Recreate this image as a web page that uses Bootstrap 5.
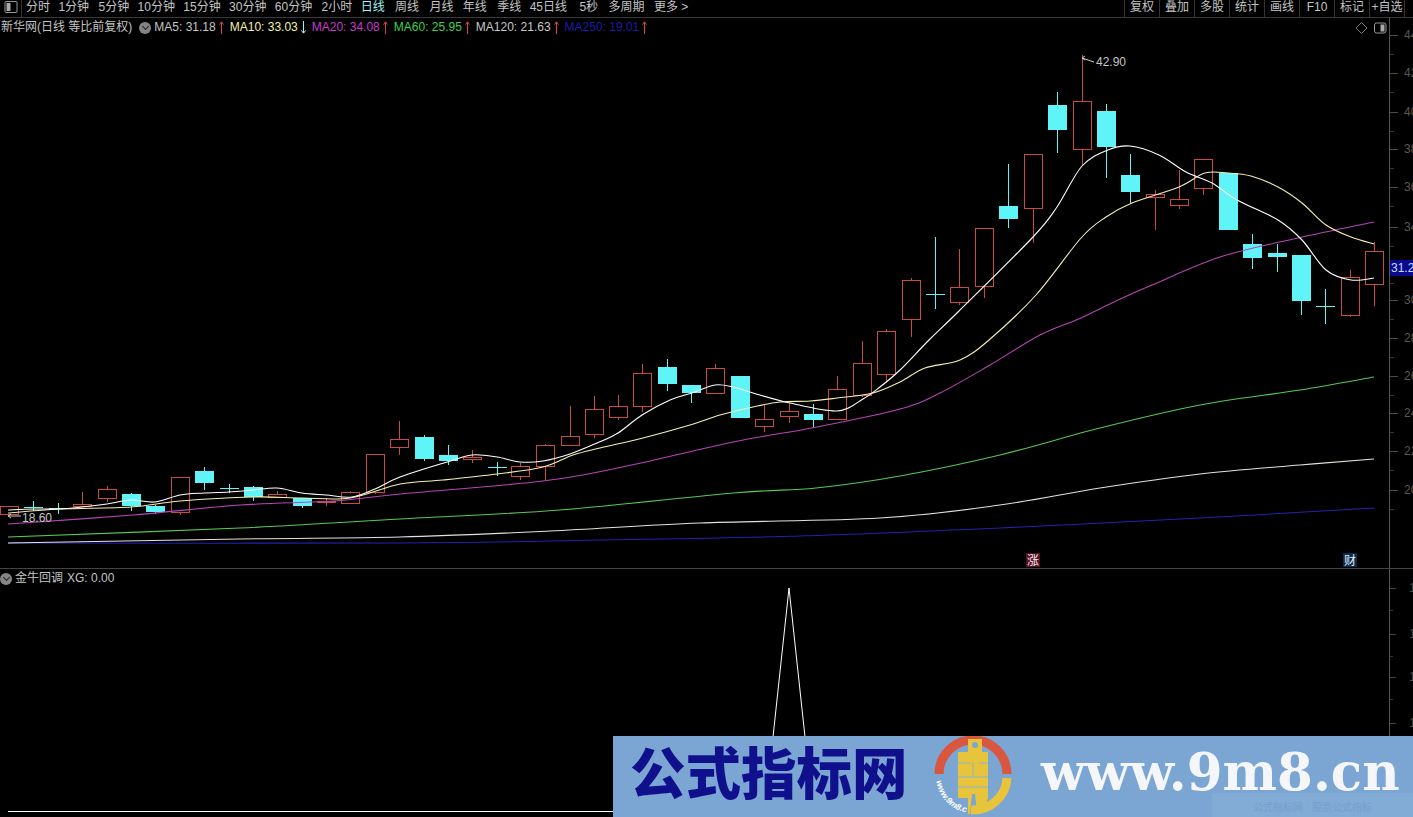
<!DOCTYPE html>
<html lang="zh">
<head>
<meta charset="utf-8">
<title>金牛回调</title>
<link href="https://cdn.jsdelivr.net/npm/bootstrap@5.3.0/dist/css/bootstrap.min.css" rel="stylesheet">
<style>
html,body{height:100%;margin:0;background:#000;overflow:hidden}
body{font-family:"Liberation Sans","Noto Sans CJK SC",sans-serif;font-size:12px;color:#c4c4c4}
.shell{width:1413px;height:817px;background:#000}
.tbar{height:18px;border-bottom:1px solid #3a3a3a;line-height:14px;flex:none}
.tbar-ico{width:14px;height:12px;margin:1px 3px 0 4px;flex:none}
.tsep{width:1px;height:17px;background:#333;margin-right:4px;flex:none}
.tleft{gap:9.4px}
.tleft span{white-space:nowrap}
.tleft .on{color:#9ff5f5}
.tleft .tight{margin-right:-1px}
.tleft .loose{margin-right:1px}
.tleft .wide{margin-right:3px}
.tright{position:absolute;left:1124px;top:0;height:17px;overflow:hidden;width:289px}
.tright span{flex:none;width:35px;border-left:1px solid #333;text-align:center;white-space:nowrap;overflow:hidden}
.upper{height:551px;flex:none;border-bottom:1px solid #444}
.lower{flex:1 1 auto;min-height:0}
.pane-svg{display:block;width:1413px;height:100%}
.legend{position:absolute;left:1px;top:2px;line-height:15px;white-space:nowrap}
.arrow-ico{width:5px;height:13px;margin:0 6px 0 3px;flex:none}
.knob{width:12px;height:12px;border-radius:50%;background:#858585;flex:none;position:relative}
.knob::after{content:"";position:absolute;left:3.500px;top:2px;width:5px;height:5px;border:solid #222;border-width:0 1.5px 1.5px 0;transform:rotate(45deg)}
.legend .knob{margin:0 3px 0 7px}
.c-ma10{color:#f5f0a8}.c-ma20{color:#c83cc8}.c-ma60{color:#3fd24a}.c-ma120{color:#c8c8c8}.c-ma250{color:#1c1ca8}
.corner{position:absolute;left:1355px;top:3px;width:33px;height:14px}
.sub-head{position:absolute;left:0;top:2px;line-height:15px;white-space:nowrap}
.sub-head .knob{margin-right:3px}
.promo{position:absolute;right:0;bottom:0;width:800px;height:81px;background:#7ba5d2;overflow:hidden}
.promo-title{position:absolute;left:17px;top:-2px;font-family:"Noto Sans CJK SC",sans-serif;font-weight:900;font-size:55.500px;line-height:72px;color:#10108c;white-space:nowrap}
.promo-logo{position:absolute;left:320px;top:0;width:84px;height:81px}
.promo-url{position:absolute;left:428px;top:12px;font-family:"DejaVu Serif",serif;font-weight:700;font-size:51.500px;line-height:48px;color:#f4f6fa;white-space:nowrap}
.promo-mark{position:absolute;right:0;bottom:0;width:201px;height:24px;padding-top:8px;background:#82abd6;color:#76a0cf;font-size:10px;line-height:14px;text-align:center}
</style>
</head>
<body>
<svg width="0" height="0" class="position-absolute">
  <symbol id="au" viewBox="0 0 5 13"><path d="M2.500 13V1M.5 3.500 2.500 .8l2 2.700" fill="none" stroke="#d84a44"/></symbol>
  <symbol id="ad" viewBox="0 0 5 13"><path d="M2.500 0V12M.5 9.500l2 2.700 2-2.700" fill="none" stroke="#9ff5f5"/></symbol>
</svg>
<div class="shell d-flex flex-column position-relative">
  <div class="tbar d-flex position-relative">
    <svg class="tbar-ico" viewBox="0 0 14 12"><rect x="1" y="0.5" width="12" height="11" rx="1" fill="none" stroke="#999"/><rect x="2.500" y="2" width="4" height="8" fill="#aaa"/></svg>
    <i class="tsep"></i>
    <div class="tleft d-flex">
      <span class="tight">分时</span><span>1分钟</span><span class="tight">5分钟</span><span class="tight">10分钟</span><span class="tight">15分钟</span><span class="tight">30分钟</span><span>60分钟</span><span class="tight">2小时</span><span class="on loose">日线</span><span class="loose">周线</span><span>月线</span><span class="loose">年线</span><span class="tight">季线</span><span class="wide">45日线</span><span class="loose">5秒</span><span>多周期</span><span>更多 &gt;</span>
    </div>
    <div class="tright d-flex">
      <span>复权</span><span>叠加</span><span>多股</span><span>统计</span><span>画线</span><span>F10</span><span>标记</span><span>+自选</span><span>返</span>
    </div>
  </div>
  <div class="upper position-relative">
    <svg class="pane-svg" id="up" viewBox="0 18 1413 550"></svg>
    <div class="legend d-flex align-items-center">
      <span>新华网(日线 等比前复权)</span><i class="knob"></i>
      <span>MA5: 31.18</span><svg class="arrow-ico"><use href="#au"/></svg>
      <span class="c-ma10">MA10: 33.03</span><svg class="arrow-ico"><use href="#ad"/></svg>
      <span class="c-ma20">MA20: 34.08</span><svg class="arrow-ico"><use href="#au"/></svg>
      <span class="c-ma60">MA60: 25.95</span><svg class="arrow-ico"><use href="#au"/></svg>
      <span class="c-ma120">MA120: 21.63</span><svg class="arrow-ico"><use href="#au"/></svg>
      <span class="c-ma250">MA250: 19.01</span><svg class="arrow-ico"><use href="#au"/></svg>
    </div>
    <svg class="corner" viewBox="0 0 33 14"><path d="M6.500 1.500 12 7 6.500 12.500 1 7Z" fill="none" stroke="#777"/><rect x="19.500" y="2" width="11.500" height="10" rx="2" fill="none" stroke="#999"/><rect x="25.500" y="3.500" width="4" height="7" fill="#aaa"/></svg>
  </div>
  <div class="lower position-relative">
    <svg class="pane-svg" id="low" viewBox="0 569 1413 248"></svg>
    <div class="sub-head d-flex align-items-center"><i class="knob"></i><span>金牛回调</span><span class="ms-1">XG: 0.00</span></div>
  </div>
  <div class="promo">
    <div class="promo-title">公式指标网</div>
    <svg class="promo-logo" viewBox="0 0 84 81">
      <path id="ringpath" d="M3.500 45A37 37 0 0 0 31 76" fill="none"/>
      <path d="M6 38A34 34 0 0 1 74 38" fill="none" stroke="#d9563f" stroke-width="9"/>
      <path d="M74 42A34 34 0 0 1 38 74" fill="none" stroke="#e8c33c" stroke-width="9"/>
      <path d="M35 3h14v13h6v46l-5 14H44L42 58h-3L37 78H35V62H25V16h10Z" fill="#e8c33c"/>
      <circle cx="42" cy="9" r="3" fill="#7ba5d2"/>
      <path d="M25 27h13M46 27h9M25 41h30M25 51h30M40 27v14" stroke="#b6bd8a" stroke-width="1.800" fill="none"/>
      <text font-size="8.500" font-family="Liberation Sans" fill="#fff" font-weight="700" font-style="italic"><textPath href="#ringpath">www.9m8.cn</textPath></text>
    </svg>
    <div class="promo-url">www.9m8.cn</div>
    <div class="promo-mark">公式指标网 · 股票公式指标</div>
  </div>
</div>
<script src="https://cdn.jsdelivr.net/npm/bootstrap@5.3.0/dist/js/bootstrap.bundle.min.js"></script>
<script>
const NS='http://www.w3.org/2000/svg';
function add(p,t,a,txt){const e=document.createElementNS(NS,t);for(const k in a)e.setAttribute(k,a[k]);if(txt!=null)e.textContent=txt;p.appendChild(e);return e}
const up=document.getElementById('up'),low=document.getElementById('low');
// x-centre, high, body top, body bottom, low, kind
const C=[[9,506,506,514,515,'r'],[33,501,507,508,511,'c'],[58,503,508,509,514,'c'],[82,492,504,506,507,'r'],[107,486,489,498,502,'r'],[131,493,494,506,511,'c'],[155,505,506,512,514,'c'],[180,477,477,512,515,'r'],[204,467,471,483,490,'c'],[229,484,488,489,493,'c'],[253,486,487,497,501,'c'],[277,491,494,497,498,'r'],[302,498,498,506,508,'c'],[326,498,501,502,506,'r'],[350,491,492,503,504,'r'],[375,454,454,492,494,'r'],[399,421,439,447,455,'r'],[424,435,437,459,461,'c'],[448,445,455,461,465,'c'],[472,450,457,459,463,'r'],[497,462,467,468,476,'c'],[520,463,466,476,480,'r'],[545,444,445,466,480,'r'],[570,406,436,445,445,'r'],[594,396,409,434,438,'r'],[618,395,406,417,420,'r'],[642,364,373,406,412,'r'],[667,359,367,384,391,'c'],[691,385,385,393,403,'c'],[715,364,368,393,393,'r'],[740,376,376,418,418,'c'],[764,405,419,426,432,'r'],[789,403,411,416,423,'r'],[813,404,414,420,427,'c'],[837,376,389,419,419,'r'],[862,341,363,395,397,'r'],[886,329,331,374,382,'r'],[911,278,280,319,337,'r'],[935,237,294,295,309,'c'],[959,249,287,302,305,'r'],[984,228,228,286,298,'r'],[1008,164,206,219,228,'c'],[1033,154,154,208,243,'r'],[1057,92,105,130,153,'c'],[1082,55,101,149,166,'r'],[1106,104,111,147,178,'c'],[1130,154,175,192,203,'c'],[1155,190,194,197,230,'r'],[1179,170,199,205,209,'r'],[1203,159,159,188,195,'r'],[1228,173,173,230,230,'c'],[1252,234,244,258,269,'c'],[1277,244,253,257,272,'c'],[1301,255,255,301,315,'c'],[1325,289,306,307,324,'c'],[1350,270,277,315,317,'r'],[1374,242,251,284,306,'r']];
const RED='#c94a42',CY='#5ff5f8';
C.forEach(([x,h,t,b,l,k])=>{
  const col=k=='r'?RED:CY, s=x+.5;
  if(h<t)add(up,'line',{x1:s,x2:s,y1:h,y2:t,stroke:col});
  if(l>b)add(up,'line',{x1:s,x2:s,y1:b,y2:l,stroke:col});
  const L=Math.max(x-9,0);
  if(k=='r')add(up,'rect',{x:L+.5,y:t+.5,width:x+9-L,height:Math.max(b-t,1),fill:'none',stroke:col});
  else add(up,'rect',{x:L,y:t,width:x+10-L,height:Math.max(b-t,1),fill:CY});
});
const L=[
 ['#2222b4',[[8,543],[400,543],[600,540],[800,536],[1000,528],[1200,518],[1374,508]]],
 ['#e6e0d8',[[8,543],[240,539],[400,537],[550,531],[700,523],[880,518],[1000,505],[1100,488],[1200,474],[1300,465],[1374,459]]],
 ['#55c855',[[8,537],[240,528],[400,519],[560,510],[733,493],[816,488],[900,476],[1000,455],[1100,428],[1200,405],[1300,390],[1374,377]]],
 ['#b844b8',[[8,524],[133,515],[240,505],[333,501],[400,494],[543,481],[627,466],[733,442],[817,427],[900,409],[940,393],[990,365],[1040,335],[1081,318],[1118,300],[1152,285],[1220,257],[1298,238],[1374,222]]],
 ['#f5f0b0',[[8,513],[60,509],[131,507],[180,501],[253,497],[302,498],[350,498],[400,484],[443,480],[497,474],[543,467],[573,455],[600,448],[643,438],[690,425],[720,415],[753,407],[780,402],[810,401],[837,398],[873,393],[900,382],[925,368],[960,360],[989,340],[1036,295],[1081,238],[1106,217],[1132,203],[1179,187],[1205,173],[1228,173],[1251,176],[1278,187],[1302,203],[1326,225],[1351,237],[1374,244]]],
 ['#ffffff',[[8,510],[33,509],[58,509],[82,507],[107,504],[131,500],[155,502],[180,495],[204,493],[229,492],[253,490],[277,488],[302,493],[326,495],[352,497],[375,489],[400,477],[447,462],[472,455],[497,457],[520,462],[543,461],[570,454],[597,443],[618,433],[642,415],[670,400],[692,393],[715,385],[733,387],[753,393],[790,403],[837,411],[863,399],[880,387],[900,370],[929,340],[958,312],[1033,237],[1057,207],[1082,166],[1108,150],[1130,146],[1159,155],[1186,172],[1212,183],[1237,200],[1278,220],[1302,240],[1326,270],[1351,280],[1374,278]]]
];
function smooth(p){let d='M'+p[0].join(' ');for(let i=0;i<p.length-1;i++){const a=p[i-1]||p[i],b=p[i],c=p[i+1],e=p[i+2]||c;d+=` C${b[0]+(c[0]-a[0])/6} ${b[1]+(c[1]-a[1])/6} ${c[0]-(e[0]-b[0])/6} ${c[1]-(e[1]-b[1])/6} ${c[0]} ${c[1]}`}return d}
L.forEach(([c,p])=>add(up,'path',{d:smooth(p),fill:'none',stroke:c,'stroke-width':1.1}));
add(up,'path',{d:'M1082 58l12 4M1085 56l-3 2 3 2',fill:'none',stroke:'#ccc'});
add(up,'text',{x:1096,y:66,fill:'#c4c4c4','font-size':12},'42.90');
add(up,'path',{d:'M8 516h13M8 516l3-2M8 516l3 2',fill:'none',stroke:'#ccc'});
add(up,'text',{x:22,y:522,fill:'#c4c4c4','font-size':12},'18.60');
add(up,'line',{x1:1389.5,x2:1389.5,y1:18,y2:568,stroke:'#555'});
[[35,'44'],[73,'42'],[112,'40'],[149,'38'],[187,'36'],[227,'34'],[264,''],[300,'30'],[338,'28'],[376,'26'],[413,'24'],[451,'22'],[490,'20']].forEach(([y,t])=>{
  add(up,'line',{x1:1390,x2:1398,y1:y+.5,y2:y+.5,stroke:'#4a4a4a'});
  add(up,'line',{x1:1390,x2:1394,y1:y+19.5,y2:y+19.5,stroke:'#333'});
  if(t)add(up,'text',{x:1404,y:y+4,fill:'#585858','font-size':12},t);
});
add(up,'rect',{x:1390,y:260,width:23,height:16,fill:'#0a0a90'});
add(up,'text',{x:1391,y:272,fill:'#c8dcff','font-size':12},'31.2');
add(up,'rect',{x:1026,y:553,width:14,height:14,fill:'#5a1020'});
add(up,'text',{x:1027,y:565,fill:'#eee','font-size':12,'font-family':'Noto Sans CJK SC'},'涨');
add(up,'rect',{x:1343,y:553,width:14,height:14,fill:'#0a2a50'});
add(up,'text',{x:1344,y:565,fill:'#eee','font-size':12,'font-family':'Noto Sans CJK SC'},'财');
add(low,'polyline',{points:'8,811.5 765,811.5 789,588 813,811.5 1374,811.5',fill:'none',stroke:'#fff'});
add(low,'line',{x1:1389.5,x2:1389.5,y1:569,y2:817,stroke:'#555'});
[588,634,677,723].forEach(y=>{
  add(low,'line',{x1:1390,x2:1396,y1:y+.5,y2:y+.5,stroke:'#444'});
  add(low,'line',{x1:1390,x2:1393,y1:y+22.5,y2:y+22.5,stroke:'#333'});
  add(low,'text',{x:1409,y:y+4,fill:'#484848','font-size':12},'1');
});
</script>
</body>
</html>
